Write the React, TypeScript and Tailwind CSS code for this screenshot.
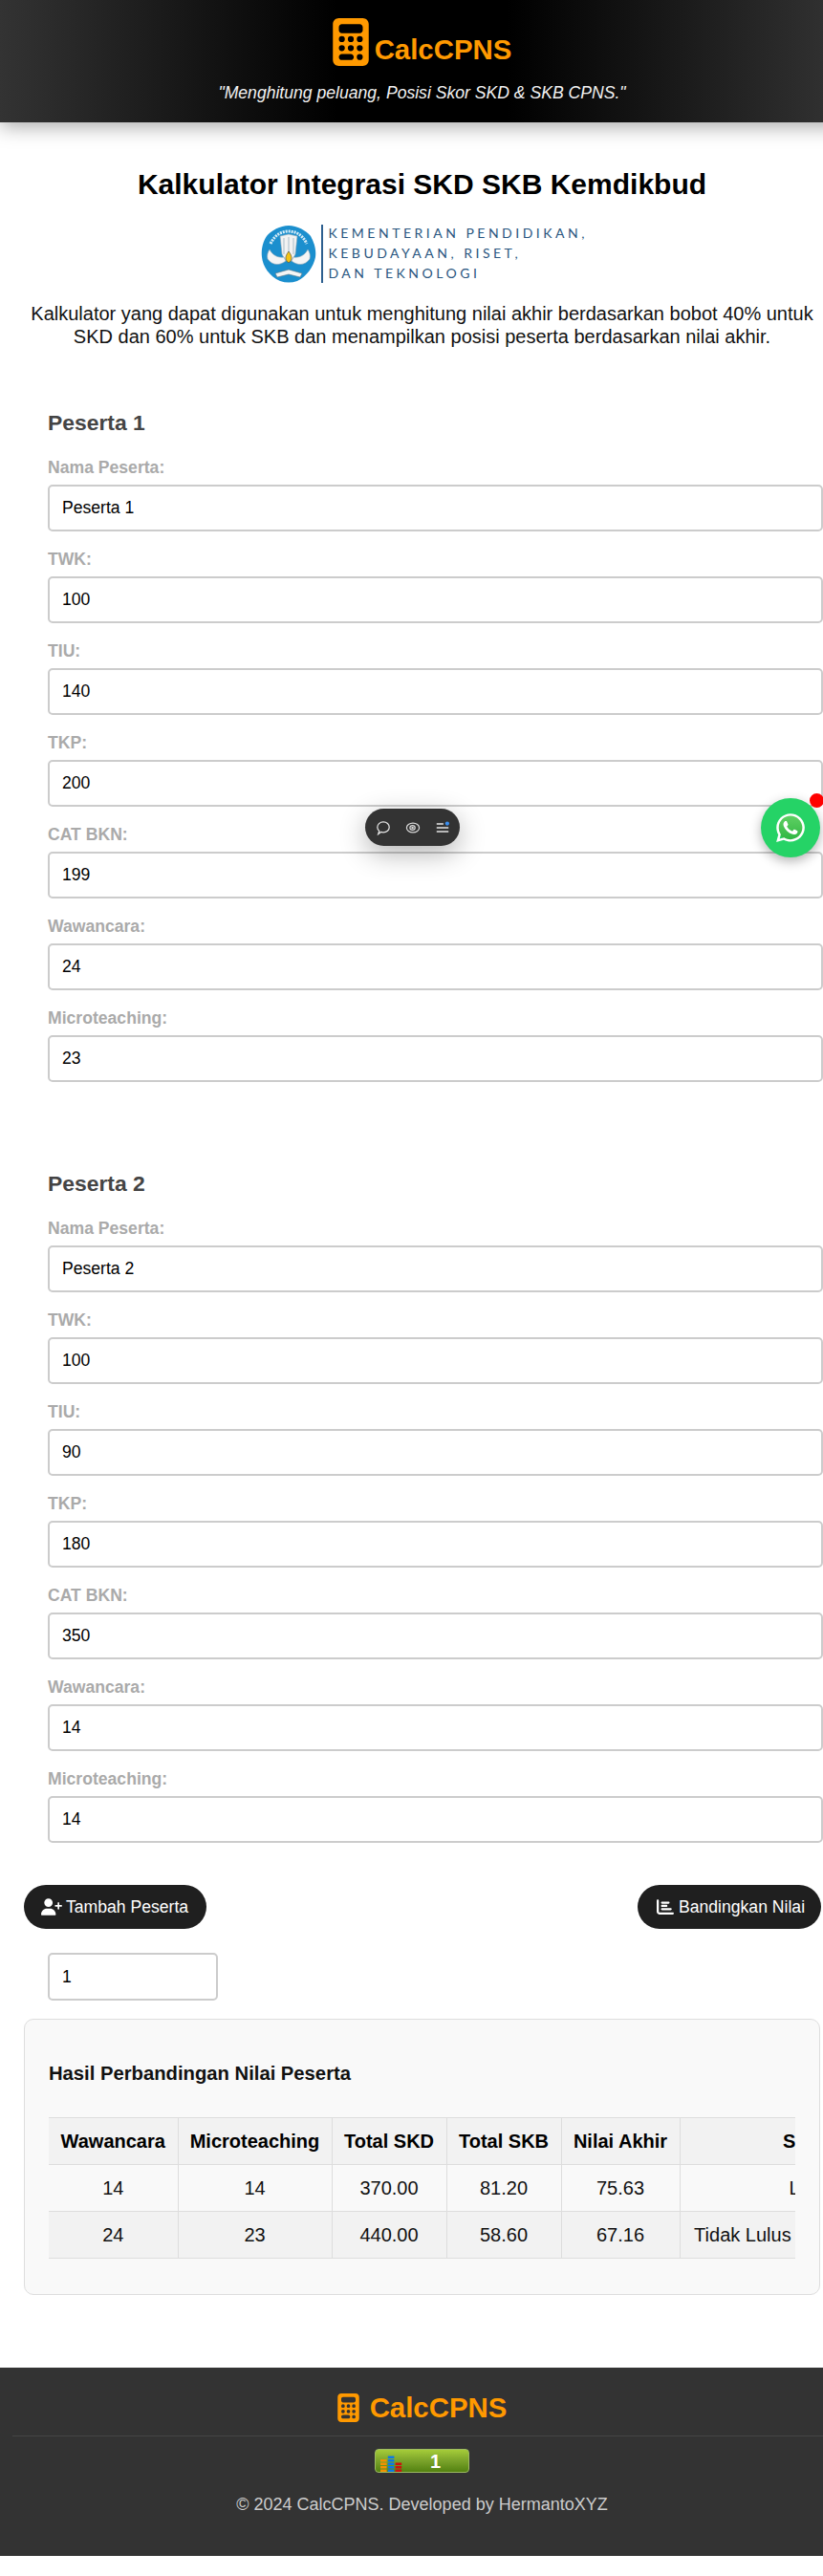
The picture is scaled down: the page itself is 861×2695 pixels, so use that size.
import React from "react";
import { FaCalculator, FaChartBar, FaUserPlus, FaWhatsapp } from "react-icons/fa6";

const peserta1 = [
    ["Nama Peserta:", "Peserta 1"],
    ["TWK:", "100"],
    ["TIU:", "140"],
    ["TKP:", "200"],
    ["CAT BKN:", "199"],
    ["Wawancara:", "24"],
    ["Microteaching:", "23"],
];

const peserta2 = [
    ["Nama Peserta:", "Peserta 2"],
    ["TWK:", "100"],
    ["TIU:", "90"],
    ["TKP:", "180"],
    ["CAT BKN:", "350"],
    ["Wawancara:", "14"],
    ["Microteaching:", "14"],
];

const headers = ["Wawancara", "Microteaching", "Total SKD", "Total SKB", "Nilai Akhir", "Status"];
const colWidths = ["w-[135px]", "w-[161px]", "w-[120px]", "w-[120px]", "w-[124px]", "w-[277px]"];

const rows = [
    ["14", "14", "370.00", "81.20", "75.63", "Lulus"],
    ["24", "23", "440.00", "58.60", "67.16", "Tidak Lulus - Nilai Terendah"],
];

function Peserta({ title, fields }: { title: string; fields: string[][] }) {
    return (
        <section className="pl-[50px]">
            <h3 className="text-[22.88px] leading-[26px] font-bold text-[#444] mb-[25px]">{title}</h3>
            {fields.map(([label, value], i) => (
                <div key={label} className={i < fields.length - 1 ? "mb-[20px]" : ""}>
                    <label className="block text-[17.6px] leading-[18px] font-bold text-[#aaa] mb-[9px]">{label}</label>
                    <input
                        defaultValue={value}
                        className="block w-[811px] h-[49px] px-[13px] border-2 border-[#ccc] rounded-[5px] bg-white text-[17.6px] text-black outline-none"
                    />
                </div>
            ))}
        </section>
    );
}

function KemdikbudLogo() {
    return (
        <div className="flex items-center justify-center h-[61px]">
            <svg width="58" height="60" viewBox="0 0 58 60" className="mr-[5px]">
                <path d="M29 0 C38 0 47 5 52 11 C56 18 58 26 57 33 C55 43 48 53 38 58 C32 60 26 60 20 58 C9 53 2 43 1 33 C0 25 2 17 6 11 C11 5 20 0 29 0Z" fill="#1b8fce" />
                <path d="M10 19 C15 9 22 6 29 6 C36 6 43 9 48 19" fill="none" stroke="#d6ecf7" strokeWidth="3" strokeDasharray="2 1" />
                <path d="M20 11 L29 9 L38 11 L36 30 L32 37 L26 37 L22 30Z" fill="#f2f2f2" stroke="#8aa5b5" strokeWidth="0.6" />
                <path d="M24 13V30M29 12V30M34 13V30" stroke="#a9bcc8" strokeWidth="1" />
                <path d="M26 37 C20 42 12 42 7 35 C6 31 7 28 9 25 C12 31 18 34 24 33Z" fill="#f5f5f5" stroke="#8aa5b5" strokeWidth="0.6" />
                <path d="M32 37 C38 42 46 42 51 35 C52 31 51 28 49 25 C46 31 40 34 34 33Z" fill="#f5f5f5" stroke="#8aa5b5" strokeWidth="0.6" />
                <path d="M29 27 C32 31 33 34 31 37 C30 39 28 39 27 37 C25 34 26 31 29 27Z" fill="#f3c417" stroke="#3b3b3b" strokeWidth="0.6" />
                <path d="M15 50 L29 46 L43 50 L41 54 L29 51 L17 54Z" fill="#f5f5f5" stroke="#5a7482" strokeWidth="0.6" />
            </svg>
            <div className="w-[2px] h-[61px] bg-[#2d5f8f] mr-[6px]" />
            <div className="text-left whitespace-nowrap font-['Lato','Noto_Sans',sans-serif] text-[#2a5680] text-[14px] leading-[21px] tracking-[3.5px] w-[267px] -mt-[2px]">
                <div>KEMENTERIAN PENDIDIKAN,</div>
                <div>KEBUDAYAAN, RISET,</div>
                <div>DAN TEKNOLOGI</div>
            </div>
        </div>
    );
}

function CounterBadge() {
    const bars = [
        [0, 14, "#f29100"],
        [0, 21, "#f29100"],
        [0, 28, "#f29100"],
        [0, 35, "#f29100"],
        [13, 7, "#0a78e8"],
        [13, 14, "#0a78e8"],
        [13, 21, "#0a78e8"],
        [13, 28, "#0a78e8"],
        [13, 35, "#0a78e8"],
        [26, 21, "#cc1010"],
        [26, 28, "#cc1010"],
        [26, 35, "#cc1010"],
    ];
    return (
        <div className="relative w-[99px] h-[25px] rounded-[4px] border border-[#9dbb62] bg-gradient-to-b from-[#a5cc39] via-[#7aa32a] to-[#53820f]">
            <svg width="24" height="20" viewBox="0 0 40 40" preserveAspectRatio="none" className="absolute left-[5px] top-[3px]">
                {bars.map(([x, y, c], i) => (
                    <rect key={i} x={x as number} y={y as number} width="11" height="5" fill={c as string} />
                ))}
            </svg>
            <span className="absolute left-[57px] top-[1px] text-white font-bold text-[20px] leading-[22px]">1</span>
        </div>
    );
}

export default function App() {
    return (
        <div className="relative w-[861px] h-[2695px] overflow-hidden bg-white text-black font-['Liberation_Sans',Arial,sans-serif]">
            {/* the page is a little wider than the window, so everything centres on x=441 */}
            <div className="w-[883px]">
                <header className="relative z-10 h-[128px] pt-[19px] text-center bg-[linear-gradient(90deg,#333_0%,#000_40%,#000_60%,#333_100%)] shadow-[0_4px_20px_rgba(0,0,0,0.35)]">
                    <div className="flex items-end justify-center h-[50px]">
                        <FaCalculator className="w-[38px] h-[50px] text-[#ff9900]" />
                        <span className="ml-[6px] text-[#ff9900] font-bold text-[29.4px] leading-[34px]">CalcCPNS</span>
                    </div>
                    <p className="mt-[18px] text-[#f2f2f2] italic text-[17.6px] leading-[20px]">"Menghitung peluang, Posisi Skor SKD &amp; SKB CPNS."</p>
                </header>

                <main className="pt-[46px]">
                    <div className="text-center">
                        <h1 className="text-[30px] leading-[37px] font-bold">Kalkulator Integrasi SKD SKB Kemdikbud</h1>
                        <div className="mt-[24px] mb-[20px]">
                            <KemdikbudLogo />
                        </div>
                        <p className="px-[25px] text-[20px] leading-[24px] text-[#111]">
                            Kalkulator yang dapat digunakan untuk menghitung nilai akhir berdasarkan bobot 40% untuk SKD dan 60% untuk SKB dan menampilkan posisi peserta berdasarkan nilai akhir.
                        </p>
                    </div>

                    <div className="mt-[65px]">
                        <Peserta title="Peserta 1" fields={peserta1} />
                    </div>
                    <div className="mt-[93px]">
                        <Peserta title="Peserta 2" fields={peserta2} />
                    </div>

                    <div className="flex justify-between w-[861px] pl-[25px] pr-[2px] mt-[44px]">
                        <button className="flex items-center h-[46px] w-[191px] pl-[18px] rounded-[23px] bg-[#1f1f1f] text-white text-[17.6px]">
                            <FaUserPlus className="w-[22px] h-[18px] mr-[4px]" />
                            Tambah Peserta
                        </button>
                        <button className="flex items-center h-[46px] w-[192px] pl-[20px] rounded-[23px] bg-[#1f1f1f] text-white text-[17.6px]">
                            <FaChartBar className="w-[18px] h-[18px] mr-[5px]" />
                            Bandingkan Nilai
                        </button>
                    </div>

                    <input
                        defaultValue="1"
                        className="block ml-[50px] mt-[25px] w-[178px] h-[50px] px-[13px] border-2 border-[#ccc] rounded-[5px] bg-white text-[17.6px] outline-none"
                    />

                    <div className="ml-[25px] mt-[19px] w-[833px] h-[289px] pt-[45px] px-[25px] rounded-[10px] border border-[#ddd] bg-[#f9f9f9]">
                        <h3 className="text-[20.24px] leading-[23px] font-bold text-[#111] mb-[34px]">Hasil Perbandingan Nilai Peserta</h3>
                        <div className="w-[781px] overflow-hidden">
                            <table className="w-[937px] table-fixed border-collapse text-[20px]">
                                <colgroup>
                                    {colWidths.map((w) => (
                                        <col key={w} className={w} />
                                    ))}
                                </colgroup>
                                <thead>
                                    <tr className="h-[49px] bg-[#f2f2f2]">
                                        {headers.map((h) => (
                                            <th key={h} className="border border-[#ddd] border-l-0 font-bold whitespace-nowrap text-center">
                                                {h}
                                            </th>
                                        ))}
                                    </tr>
                                </thead>
                                <tbody>
                                    {rows.map((row, i) => (
                                        <tr key={i} className={i === 1 ? "h-[49px] bg-[#f2f2f2]" : "h-[49px]"}>
                                            {row.map((cell, j) => (
                                                <td key={j} className="border border-[#ddd] border-l-0 text-center whitespace-nowrap text-[#111]">
                                                    {cell}
                                                </td>
                                            ))}
                                        </tr>
                                    ))}
                                </tbody>
                            </table>
                        </div>
                    </div>
                </main>

                <footer className="mt-[76px] h-[197px] bg-[#333] pt-[27px] text-center">
                    <div className="flex items-center justify-center h-[30px]">
                        <FaCalculator className="w-[23px] h-[30px] text-[#ff9900]" />
                        <span className="ml-[11px] text-[#ff9900] font-bold text-[29.4px] leading-[34px]">CalcCPNS</span>
                    </div>
                    <div className="ml-[13px] mt-[14px] h-px bg-[#444]" />
                    <div className="flex justify-center mt-[13px]">
                        <CounterBadge />
                    </div>
                    <p className="mt-[23px] text-[#ccc] text-[18px] leading-[20px]">© 2024 CalcCPNS. Developed by HermantoXYZ</p>
                </footer>
            </div>

            {/* floating toolbar */}
            <div className="absolute left-[382px] top-[846px] w-[99px] h-[39px] rounded-[20px] bg-[#333] flex items-center justify-center gap-[15px] shadow-[0_8px_28px_rgba(0,0,0,0.3)]">
                <svg width="16" height="16" viewBox="0 0 18 18" fill="none" stroke="#e5e5e5" strokeWidth="1.4">
                    <path d="M3 16.5 L4.2 12.8 C2.8 11.5 2 10 2 8.5 C2 5 5 2.2 9 2.2 C13 2.2 16 5 16 8.4 C16 11.8 13 14.4 9 14.4 C8 14.4 7 14.3 6.2 14 Z" />
                </svg>
                <svg width="16" height="16" viewBox="0 0 18 18" fill="none" stroke="#d8d8d8" strokeWidth="1.4">
                    <ellipse cx="9" cy="9" rx="7.4" ry="5.6" />
                    <ellipse cx="8.5" cy="9" rx="3" ry="2.6" />
                    <circle cx="8.5" cy="9" r="0.7" fill="#d8d8d8" />
                </svg>
                <svg width="16" height="16" viewBox="0 0 18 18" fill="none" stroke="#e5e5e5" strokeWidth="1.5">
                    <path d="M2 4.5H10M2 9H16M2 13.5H16" />
                    <circle cx="14.5" cy="4" r="2.4" fill="#3b8ff0" stroke="none" />
                </svg>
            </div>

            {/* whatsapp button */}
            <div className="absolute left-[796px] top-[835px] w-[62px] h-[62px] rounded-full bg-[#25d366] flex items-center justify-center shadow-[0_4px_12px_rgba(0,0,0,0.3)]">
                <div className="absolute w-[27px] h-[27px] rounded-full bg-gradient-to-b from-[#5fd064] to-[#2ab540]" />
                <FaWhatsapp className="relative w-[34px] h-[34px] text-white" />
            </div>
            <div className="absolute left-[847px] top-[830px] w-[15px] h-[15px] rounded-full bg-[#ff0000]" />
        </div>
    );
}
